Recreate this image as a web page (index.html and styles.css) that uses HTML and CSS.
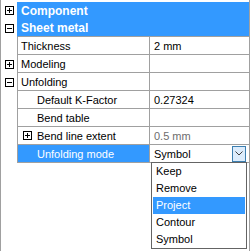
FILE: index.html
```html
<!DOCTYPE html>
<html>
<head>
<meta charset="utf-8">
<link rel="stylesheet" href="styles.css">
</head>
<body>
<div class="pane">
  <div class="row hdr first">
    <div class="gut"><span class="tog plus"></span></div>
    <div class="cells"><div class="hname">Component</div></div>
  </div>
  <div class="row hdr">
    <div class="gut"><span class="tog minus"></span></div>
    <div class="cells"><div class="hname">Sheet metal</div></div>
  </div>
  <div class="row">
    <div class="gut"></div>
    <div class="cells"><div class="name">Thickness</div><div class="val">2 mm</div></div>
  </div>
  <div class="row">
    <div class="gut"><span class="tog plus"></span></div>
    <div class="cells"><div class="name">Modeling</div><div class="val"></div></div>
  </div>
  <div class="row">
    <div class="gut"><span class="tog minus"></span></div>
    <div class="cells"><div class="name">Unfolding</div><div class="val"></div></div>
  </div>
  <div class="row">
    <div class="gut"></div>
    <div class="cells"><div class="name l2">Default K-Factor</div><div class="val">0.27324</div></div>
  </div>
  <div class="row">
    <div class="gut"></div>
    <div class="cells"><div class="name l2">Bend table</div><div class="val"></div></div>
  </div>
  <div class="row">
    <div class="gut"></div>
    <div class="cells"><div class="name l2t"><span class="tog plus"></span><span>Bend line extent</span></div><div class="val dim">0.5 mm</div></div>
  </div>
  <div class="row">
    <div class="gut"></div>
    <div class="cells"><div class="name l2 sel">Unfolding mode</div>
      <div class="val combo"><span class="ctext">Symbol</span><span class="cbtn"><svg width="8" height="5" viewBox="0 0 8 5"><polyline points="0.5,0.5 4,4 7.5,0.5" fill="none" stroke="#404040" stroke-width="1"/></svg></span></div>
    </div>
  </div>
  <ul class="list">
    <li>Keep</li>
    <li>Remove</li>
    <li class="on">Project</li>
    <li>Contour</li>
    <li>Symbol</li>
  </ul>
</div>
</body>
</html>
```
FILE: styles.css
```css
html, body {
  margin: 0;
  padding: 0;
  background: #fff;
}
body {
  font-family: "Liberation Sans", Arial, sans-serif;
  font-size: 11px;
  color: #000;
}
.pane {
  position: relative;
  width: 250px;
  height: 251px;
  box-sizing: border-box;
  border-left: 1px solid #a0a0a0;
  border-right: 1px solid #a0a0a0;
  padding-top: 2px;
}
.row {
  display: flex;
  height: 18px;
}
.row.hdr {
  height: 17px;
}
.row.hdr + .row.hdr {
  height: 18px;
}
.gut {
  width: 16px;
  flex: none;
  display: flex;
  align-items: center;
  padding-left: 4px;
  box-sizing: border-box;
}
.cells {
  flex: 1;
  display: flex;
  border-left: 1px solid #a0a0a0;
  border-bottom: 1px solid #a0a0a0;
  min-width: 0;
}
.hdr .cells {
  background: #3399ff;
  border-left-color: #3399ff;
}
.hdr.first .cells {
  border-bottom: none;
}
.hname {
  color: #fff;
  font-weight: bold;
  font-size: 12px;
  padding-left: 3px;
  display: flex;
  align-items: center;
}
.name {
  width: 132px;
  flex: none;
  border-right: 1px solid #a0a0a0;
  padding-left: 3px;
  box-sizing: border-box;
  display: flex;
  align-items: center;
  white-space: nowrap;
}
.name.l2 {
  padding-left: 19px;
}
.name.l2t {
  padding-left: 5px;
  gap: 5px;
}
.name.sel {
  background: #3399ff;
  color: #fff;
}
.val {
  flex: 1;
  padding-left: 4px;
  display: flex;
  align-items: center;
}
.val.dim {
  color: #6d6d6d;
}
.combo {
  padding-right: 3px;
}
.ctext {
  flex: 1;
}
.cbtn {
  width: 14px;
  height: 16px;
  box-sizing: border-box;
  border: 1px solid #3c7fb1;
  background: #dcecfc;
  display: flex;
  align-items: center;
  justify-content: center;
}
.tog {
  width: 9px;
  height: 9px;
  box-sizing: border-box;
  border: 1px solid #000;
  position: relative;
  flex: none;
  background: #fff;
}
.tog::before {
  content: "";
  position: absolute;
  left: 1px;
  top: 3px;
  width: 5px;
  height: 1px;
  background: #000;
}
.tog.plus::after {
  content: "";
  position: absolute;
  left: 3px;
  top: 1px;
  width: 1px;
  height: 5px;
  background: #000;
}
.list {
  position: absolute;
  left: 150px;
  top: 162px;
  width: 96px;
  margin: 0;
  padding: 0;
  list-style: none;
  border: 1px solid #646464;
  background: #fff;
  box-sizing: border-box;
}
.list li {
  height: 17px;
  line-height: 17px;
  padding-left: 3px;
  margin: 0 1px;
}
.list li.on {
  background: #3399ff;
  color: #fff;
}
```
